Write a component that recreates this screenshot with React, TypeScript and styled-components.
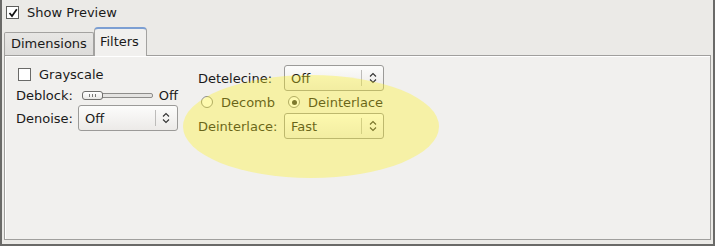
import React from 'react';
import styled, { createGlobalStyle, css } from 'styled-components';

const GlobalStyle = createGlobalStyle`
    body {
        margin: 0;
        background: #edece9;
        font-family: "DejaVu Sans", "Liberation Sans", sans-serif;
        font-size: 13px;
        color: #1a1a1a;
    }
`;

const CheckMark = (): JSX.Element => (
    <svg width="10" height="10" viewBox="0 0 10 10">
        <path d="M1.5 5 L4 8 L8.8 1.2" fill="none" stroke="#111" strokeWidth="1.7" />
    </svg>
);

const Chevrons = (): JSX.Element => (
    <svg width="8" height="12" viewBox="0 0 8 12">
        <path d="M1 4.5 L4 1.5 L7 4.5 M1 7.5 L4 10.5 L7 7.5" fill="none" stroke="#333" strokeWidth="1.1" />
    </svg>
);

interface IComboProps {
    value: string;
}

const Combo = ( props: IComboProps ): JSX.Element => {
    const { value } = props;
    return (
        <ComboBox>
            <ComboText>{value}</ComboText>
            <ComboArrow>
                <Chevrons />
            </ComboArrow>
        </ComboBox>
    );
};

const App = (): JSX.Element => {
    return (
        <>
            <GlobalStyle />
            <Window>
                <TopRow>
                    <CheckBox><CheckMark /></CheckBox>
                    <span>Show Preview</span>
                </TopRow>

                <TabBar>
                    <Tab>Dimensions</Tab>
                    <Tab $active>Filters</Tab>
                </TabBar>

                <Panel>
                    <Column $width={162} $top={7}>
                        <Row $height={22}>
                            <CheckBox $inset />
                            <span>Grayscale</span>
                        </Row>
                        <Row $height={20}>
                            <span>Deblock:</span>
                            <Slider>
                                <Thumb><i /><i /><i /></Thumb>
                            </Slider>
                            <span>Off</span>
                        </Row>
                        <Row $height={26}>
                            <Label>Denoise:</Label>
                            <Combo value="Off" />
                        </Row>
                    </Column>

                    <Column $width={200} $top={9}>
                        <Row $height={26}>
                            <Label $width={86}>Detelecine:</Label>
                            <Combo value="Off" />
                        </Row>
                        <Row $height={22}>
                            <RadioItem>
                                <Radio />
                                <span>Decomb</span>
                            </RadioItem>
                            <RadioItem>
                                <Radio $checked />
                                <span>Deinterlace</span>
                            </RadioItem>
                        </Row>
                        <Row $height={26}>
                            <Label $width={86}>Deinterlace:</Label>
                            <Combo value="Fast" />
                        </Row>
                    </Column>
                </Panel>

                <Highlight />
            </Window>
        </>
    );
};

export default App;


const Window = styled.div`
    position: relative;
    box-sizing: border-box;
    width: 715px;
    height: 246px;
    padding: 0 2px 2px 2px;
    border-left: 2px solid #6a6a68;
    border-right: 2px solid #6a6a68;
    border-bottom: 2px solid #6a6a68;
    background: #ebeae7;
    display: flex;
    flex-direction: column;
    overflow: hidden;
`;

const TopRow = styled.div`
    height: 25px;
    padding-left: 2px;
    display: flex;
    flex-direction: row;
    align-items: center;
    gap: 8px;
`;

const CheckBox = styled.div<{ $inset?: boolean }>`
    box-sizing: border-box;
    width: 13px;
    height: 13px;
    border: 1px solid #5e5e5c;
    background: #fff;
    display: flex;
    align-items: center;
    justify-content: center;
    ${(p) => p.$inset && css`
        border-color: #6a6a68;
        margin-left: 2px;
    `}
`;

const TabBar = styled.div`
    height: 29px;
    margin-top: 1px;
    display: flex;
    flex-direction: row;
    align-items: flex-end;
`;

const Tab = styled.div<{ $active?: boolean }>`
    box-sizing: border-box;
    height: 23px;
    padding: 0 6px 1px 6px;
    display: flex;
    align-items: center;
    border: 1px solid #a3a2a0;
    border-bottom: none;
    border-radius: 2px 2px 0 0;
    background: linear-gradient(#e7e6e4, #dddcda);
    ${(p) => p.$active && css`
        height: 29px;
        margin-bottom: -1px;
        padding: 0 7px 3px 5px;
        border-top: 2px solid #7c9fd3;
        border-radius: 4px 4px 0 0;
        background: #f1f0ee;
        position: relative;
        z-index: 1;
    `}
`;

const Panel = styled.div`
    flex: 1;
    margin-bottom: 2px;
    border: 1px solid #a09f9d;
    box-shadow: inset 1px 1px 0 #ffffff;
    background: #f1f0ee;
    display: flex;
    flex-direction: row;
    padding-left: 11px;
    gap: 20px;
`;

const Column = styled.div<{ $width: number; $top: number }>`
    width: ${(p) => p.$width}px;
    padding-top: ${(p) => p.$top}px;
    display: flex;
    flex-direction: column;
`;

const Row = styled.div<{ $height: number }>`
    height: ${(p) => p.$height}px;
    display: flex;
    flex-direction: row;
    align-items: center;
    gap: 8px;
`;

const Label = styled.span<{ $width?: number }>`
    width: ${(p) => (p.$width ? `${p.$width}px` : 'auto')};
    margin-right: ${(p) => (p.$width ? '-8px' : '-3px')};
`;

const Slider = styled.div`
    position: relative;
    box-sizing: border-box;
    width: 72px;
    height: 5px;
    margin: 0 -2px 0 1px;
    border: 1px solid #8e8d8b;
    border-radius: 2px;
    background: #e4e3e1;
`;

const Thumb = styled.div`
    position: absolute;
    left: -1px;
    top: -3px;
    box-sizing: border-box;
    width: 21px;
    height: 9px;
    border: 1px solid #6f6e6c;
    border-radius: 3px;
    background: linear-gradient(#ffffff, #e9e8e6);
    display: flex;
    justify-content: center;
    align-items: center;
    gap: 2px;
    i {
        display: block;
        width: 1px;
        height: 3px;
        background: #7a7a78;
    }
`;

const ComboBox = styled.div`
    box-sizing: border-box;
    width: 100px;
    height: 26px;
    border: 1px solid #9b9a98;
    border-radius: 3px;
    background: linear-gradient(#fcfcfb, #eceae8);
    display: flex;
    flex-direction: row;
    align-items: center;
`;

const ComboText = styled.span`
    flex: 1;
    padding-left: 6px;
`;

const ComboArrow = styled.div`
    width: 21px;
    height: 16px;
    border-left: 1px solid #bdbcba;
    display: flex;
    align-items: center;
    justify-content: center;
`;

const RadioItem = styled.div`
    display: flex;
    flex-direction: row;
    align-items: center;
    gap: 8px;
    margin-left: 3px;
    margin-right: 2px;
`;

const Radio = styled.div<{ $checked?: boolean }>`
    box-sizing: border-box;
    width: 12px;
    height: 12px;
    border: 1px solid #8a8987;
    border-radius: 50%;
    background: #fdfdfc;
    display: flex;
    align-items: center;
    justify-content: center;
    ${(p) => p.$checked && css`
        &::after {
            content: '';
            width: 5px;
            height: 5px;
            border-radius: 50%;
            background: #3a3a38;
        }
    `}
`;

const Highlight = styled.div`
    position: absolute;
    left: 181px;
    top: 75px;
    width: 256px;
    height: 103px;
    border-radius: 50%;
    background: rgba(255, 243, 25, 0.34);
    pointer-events: none;
`;
